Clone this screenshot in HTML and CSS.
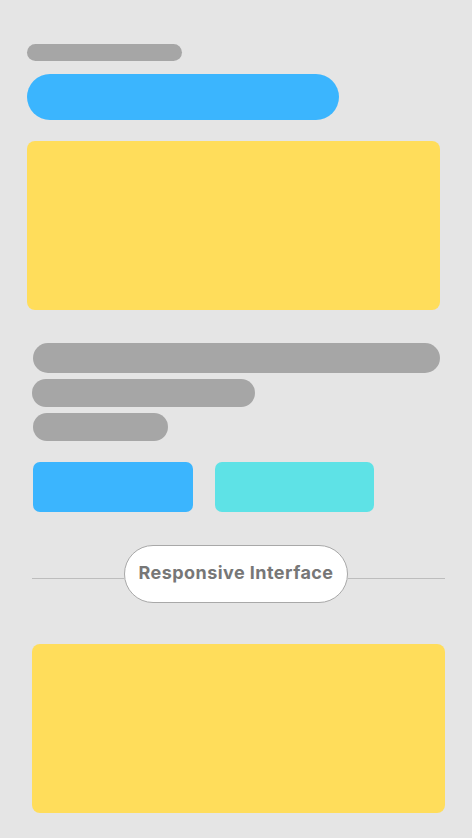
FILE: index.html
```html
<!DOCTYPE html>
<html lang="en">
<head>
<meta charset="utf-8">
<title>Responsive Interface</title>
<link rel="stylesheet" href="styles.css">
</head>
<body>
<main class="page">
  <div class="label-bar"></div>
  <div class="title-bar"></div>
  <div class="hero"></div>
  <div class="lines">
    <div class="line line-1"></div>
    <div class="line line-2"></div>
    <div class="line line-3"></div>
  </div>
  <div class="buttons">
    <div class="btn btn-blue"></div>
    <div class="btn btn-teal"></div>
  </div>
  <div class="divider">
    <span class="rule rule-left"></span>
    <span class="pill">Responsive Interface</span>
    <span class="rule rule-right"></span>
  </div>
  <div class="hero hero-2"></div>
</main>
</body>
</html>
```
FILE: styles.css
```css
html, body {
  margin: 0;
  padding: 0;
  background: #e5e5e5;
}
.page {
  padding-top: 44px;
  width: 472px;
  min-height: 838px;
  box-sizing: border-box;
}
.label-bar {
  margin-left: 27px;
  width: 155px;
  height: 17px;
  border-radius: 9px;
  background: #a6a6a6;
}
.title-bar {
  margin-top: 13px;
  margin-left: 27px;
  width: 312px;
  height: 46px;
  border-radius: 23px;
  background: #3bb5fe;
}
.hero {
  margin-top: 21px;
  margin-left: 27px;
  width: 413px;
  height: 169px;
  border-radius: 8px;
  background: #ffdd5b;
}
.lines {
  margin-top: 33px;
  display: flex;
  flex-direction: column;
  gap: 6px;
}
.line {
  background: #a6a6a6;
}
.line-1 {
  margin-left: 33px;
  width: 407px;
  height: 30px;
  border-radius: 15px;
}
.line-2 {
  margin-left: 32px;
  width: 223px;
  height: 28px;
  border-radius: 14px;
}
.line-3 {
  margin-left: 33px;
  width: 135px;
  height: 28px;
  border-radius: 14px;
}
.buttons {
  margin-top: 21px;
  margin-left: 33px;
  display: flex;
  gap: 22px;
}
.btn {
  width: 160px;
  height: 50px;
  border-radius: 7px;
}
.btn-blue { background: #3bb5fe; }
.btn-teal { background: #5ee2e6; width: 159px; }
.divider {
  margin-top: 33px;
  margin-left: 32px;
  width: 413px;
  display: flex;
  align-items: flex-start;
}
.rule {
  height: 1px;
  margin-top: 33px;
  background: #bdbdbd;
}
.rule-left { width: 92px; flex: none; }
.rule-right { flex: 1; }
.pill {
  flex: none;
  width: 224px;
  height: 58px;
  box-sizing: border-box;
  padding-bottom: 3px;
  border: 1px solid #a8a8a8;
  border-radius: 29px;
  background: #ffffff;
  display: flex;
  align-items: center;
  justify-content: center;
  font-family: "Inter", "Noto Sans", sans-serif;
  font-weight: 700;
  font-size: 18px;
  color: #777777;
  letter-spacing: 0.45px;
}
.hero-2 {
  margin-top: 41px;
  margin-left: 32px;
}
```
